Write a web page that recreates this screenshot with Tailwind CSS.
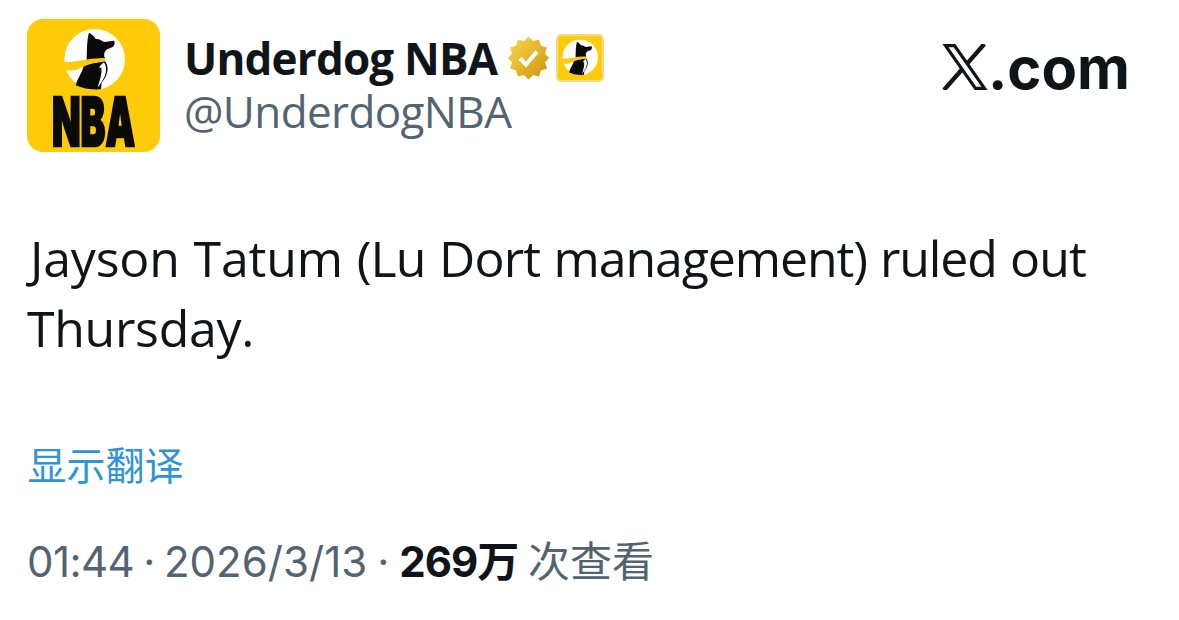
<!DOCTYPE html>
<html lang="zh-CN">
<head>
<meta charset="utf-8">
<title>Underdog NBA</title>
<script src="https://cdn.jsdelivr.net/npm/@tailwindcss/browser@4"></script>
</head>
<body class="bg-white">
<svg class="hidden">
  <symbol id="dog" viewBox="28 15 182 182">
    <circle cx="119" cy="106" r="91" fill="#fff"/>
    <path fill="#0a0a08" d="M102 26C110 31 119 36 122 45C132 44 140 49 147 54L177 50C181 56 179 66 171 70L154 77C146 86 146 94 150 103L95 108C96 80 95 50 102 26Z"/>
    <path fill="#0a0a08" d="M86 122L150 112C164 130 158 155 140 176L138 196Q98 200 62 184C68 160 85 142 86 122Z"/>
    <path fill="#fff" d="M147 115C136 124 131 130 135 133L139 130C142 150 134 170 128 190L134 183C152 160 160 135 147 115Z"/>
    <path fill="#fdcb0a" d="M26 113C65 117 100 100 148 103L152 111C125 113 95 122 72 134C58 141 46 140 34 139Z"/>
  </symbol>
</svg>
<main class="w-[1179px] h-[620px] flex flex-col pl-[27px] pt-[19px] text-[#0f1419] font-['Open_Sans','Noto_Sans_CJK_SC',sans-serif] whitespace-nowrap">
  <header class="flex items-start h-[133px]">
    <svg class="size-[133px] rounded-[16px] shrink-0 overflow-visible bg-[#fdcb0a]" viewBox="0 0 133 133">
      <use href="#dog" x="37.3" y="10" width="60.7" height="60.7"/>
      <text transform="translate(25 127) scale(.555 1)" font-family="Inter" font-weight="900" font-size="67" stroke="#0a0a08" stroke-width="2.5" fill="#0a0a08">NBA</text>
    </svg>
    <div class="ml-[24px] pt-[9px]">
      <div class="flex items-center h-[60px]">
        <span class="text-[44px] font-bold leading-[60px] tracking-[-.82px]">Underdog NBA</span>
        <svg class="w-[41px] h-[44px] ml-[11px] shrink-0" viewBox="0 0 41 44">
          <defs><linearGradient id="gold" x1="0" y1="0" x2="1" y2="1"><stop offset="0" stop-color="#f7d95a"/><stop offset=".5" stop-color="#e5b727"/><stop offset="1" stop-color="#c98f12"/></linearGradient></defs>
          <path fill="url(#gold)" d="M20.500 .5L25 5L31 3.500L33 9.500L39 11.500L37 17.500L41 22L37 26.500L39 32.500L33 34.500L31 40.500L25 39L20.500 43.500L16 39L10 40.500L8 34.500L2 32.500L4 26.500L0 22L4 17.500L2 11.500L8 9.500L10 3.500L16 5Z"/>
          <path d="M12 22.500L18 28.500L29 15.500" fill="none" stroke="#fff" stroke-width="4.200"/>
        </svg>
        <svg class="size-[48px] ml-[7px] rounded-[5px] shrink-0 bg-[#fdcb0a] border-2 border-[#f3dc83]" viewBox="0 0 44 44"><use href="#dog" x="4.500" y="3.500" width="35.500" height="35.500"/></svg>
      </div>
      <div class="-mt-[7px] text-[44px] leading-[60px] text-[#536471] tracking-[-.62px]">@UnderdogNBA</div>
    </div>
    <div class="ml-auto mr-[49px] pt-[15px] flex items-start">
      <svg class="w-[46px] h-[46px] mt-[10px]" viewBox="0 0 46 46"><g fill="none" stroke="#0f1419"><path stroke-width="3.200" d="M3.500 1.700H12.500L42.500 44.400H33.500Z"/><path stroke-width="4.300" d="M42.300 0L25.800 18.800M19.500 26L2 46"/></g></svg>
      <span class="text-[58px] leading-[68px] font-bold font-['Inter',sans-serif]">.com</span>
    </div>
  </header>
  <p class="mt-[71px] text-[50px] leading-[70px] [word-spacing:1.2px]"><span class="pl-[3px] tracking-[-.2px]">Jayson Tatum </span><span class="tracking-[-.85px]">(Lu Dort </span><span class="tracking-[-1.100px]">management) </span><span class="tracking-[-1.100px]">ruled </span><span class="tracking-[-.8px]">out</span><br><span class="tracking-[-.3px]">Thursday.</span></p>
  <div class="mt-[70px] flex"><a class="ml-[.5px] text-[39px] leading-[60px] text-[#2f93d8] font-['Noto_Sans_CJK_SC',sans-serif]">显示翻译</a></div>
  <div class="mt-[39px] text-[42px] leading-[60px] text-[#536471] font-['Inter','Noto_Sans_CJK_SC',sans-serif] [word-spacing:-2px]"><span class="tracking-[-.6px]">01:44 · </span><span class="tracking-[.05px]">2026/3/13 · </span><b class="text-[#0f1419] tracking-[-1px]">269万</b> 次查看</div>
</main>
</body>
</html>
